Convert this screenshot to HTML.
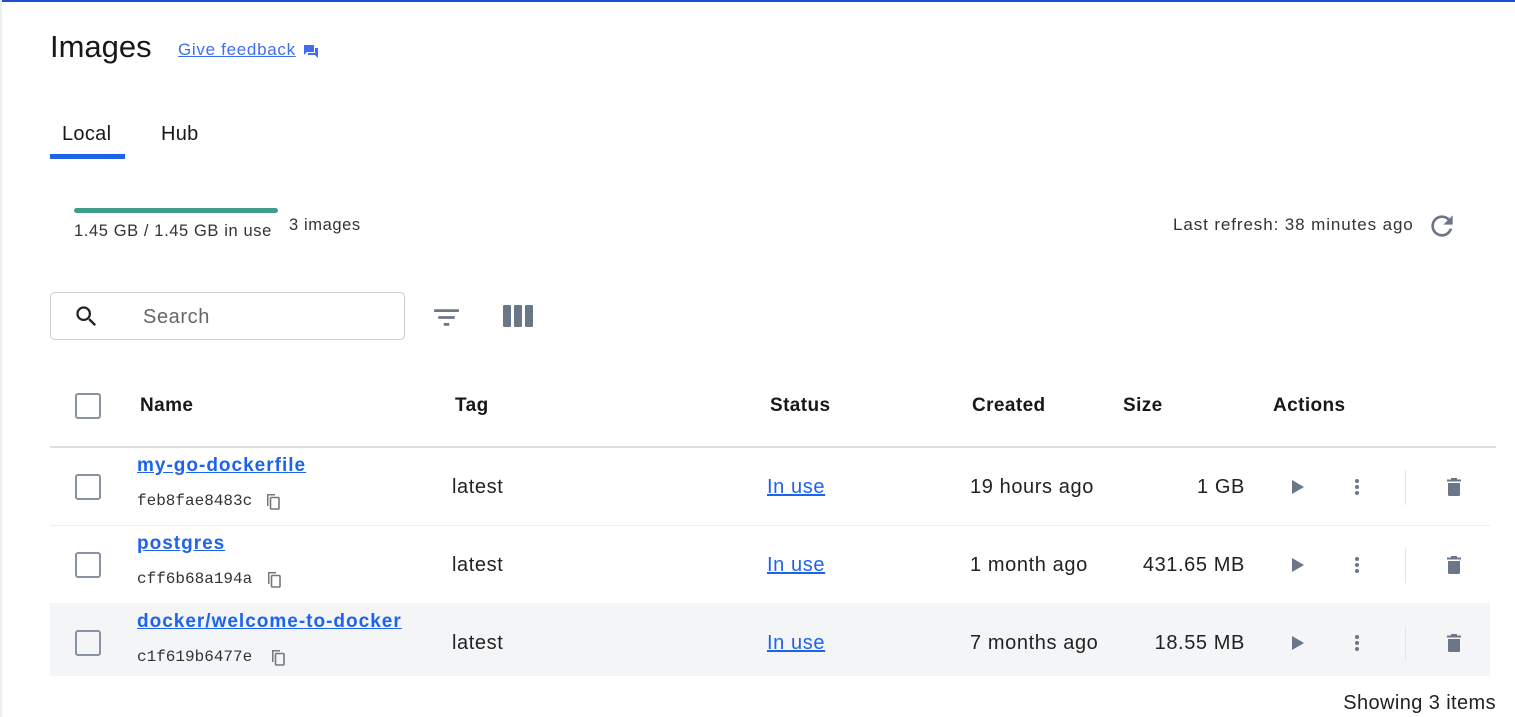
<!DOCTYPE html>
<html><head><meta charset="utf-8"><style>
*{margin:0;padding:0;box-sizing:border-box}
body{width:1515px;height:717px;overflow:hidden;background:#fff;font-family:"Liberation Sans",Arial,sans-serif;color:#17181a;position:relative}
.a{position:absolute;white-space:nowrap}
.lnk{color:#1d63ed;text-decoration:underline;font-weight:bold;font-size:19px;letter-spacing:1px}
.cb{position:absolute;width:26px;height:26px;border:2.5px solid #8a93a3;border-radius:3px}
.mono{font-family:"Liberation Mono",monospace;font-size:16px;color:#333}
.cell{font-size:20px;color:#222;letter-spacing:0.6px}
.hd{font-size:19px;font-weight:bold;color:#17181a;letter-spacing:0.4px}
</style></head><body>
<div class="a" style="left:0;top:0;width:1515px;height:2px;background:#1d4fd0"></div>
<div class="a" style="left:0;top:0;width:2px;height:717px;background:#eee"></div>
<div class="a" style="left:50px;top:29px;font-size:31px">Images</div>
<div class="a" style="left:178px;top:40px;font-size:17px;color:#3d6ff0;text-decoration:underline;letter-spacing:0.7px">Give feedback</div>
<svg class="a" style="left:303px;top:44px" width="16" height="16" viewBox="0 0 16 16"><path d="M1 1h10v7H4l-3 3z" fill="#3d6ff0"/><path d="M12 4h3v10l-3-3H5V9h7z" fill="#3d6ff0"/></svg>
<div class="a" style="left:62px;top:123px;font-size:20px;letter-spacing:0.3px">Local</div>
<div class="a" style="left:161px;top:123px;font-size:20px;letter-spacing:0.3px">Hub</div>
<div class="a" style="left:50px;top:154px;width:75px;height:5px;background:#1d63ed"></div>
<div class="a" style="left:74px;top:208px;width:204px;height:5px;background:#3e9d88;border-radius:3px"></div>
<div class="a" style="left:74px;top:222px;font-size:16.5px;color:#333;letter-spacing:0.6px">1.45 GB / 1.45 GB in use</div>
<div class="a" style="left:289px;top:216px;font-size:16.5px;color:#333;letter-spacing:0.6px">3 images</div>
<div class="a" style="left:1173px;top:215px;font-size:17px;color:#333;letter-spacing:0.9px">Last refresh: 38 minutes ago</div>
<svg class="a" style="left:1426px;top:210px" width="32" height="32" viewBox="0 0 24 24"><path d="M17.65 6.35A7.96 7.96 0 0 0 12 4a8 8 0 1 0 7.73 10h-2.08A6 6 0 1 1 12 6c1.66 0 3.14.69 4.22 1.78L13 11h7V4z" fill="#6c7689"/></svg>
<div class="a" style="left:50px;top:292px;width:355px;height:48px;border:1.5px solid #c9ccd1;border-radius:5px"></div>
<svg class="a" style="left:73px;top:303px" width="27" height="27" viewBox="0 0 24 24"><path d="M15.5 14h-.79l-.28-.27A6.47 6.47 0 0 0 16 9.5 6.5 6.5 0 1 0 9.5 16c1.61 0 3.09-.59 4.23-1.57l.27.28v.79l5 4.99L20.49 19zm-6 0C7.01 14 5 11.99 5 9.5S7.01 5 9.5 5 14 7.01 14 9.5 11.99 14 9.5 14" fill="#222"/></svg>
<div class="a" style="left:143px;top:306px;font-size:20px;color:#666;letter-spacing:0.6px">Search</div>
<svg class="a" style="left:430px;top:301px" width="33" height="33" viewBox="0 0 24 24"><path d="M3 6h18v2H3zm3 5h12v2H6zm4 5h4v2h-4z" fill="#6c7689"/></svg>
<svg class="a" style="left:503px;top:305px" width="30" height="22" viewBox="0 0 30 22"><rect x="0" y="0" width="8" height="22" rx="1" fill="#6c7689"/><rect x="11" y="0" width="8" height="22" rx="1" fill="#6c7689"/><rect x="22" y="0" width="8" height="22" rx="1" fill="#6c7689"/></svg>

<div class="cb" style="left:75px;top:393px"></div>
<div class="a hd" style="left:140px;top:395px">Name</div>
<div class="a hd" style="left:455px;top:395px">Tag</div>
<div class="a hd" style="left:770px;top:395px">Status</div>
<div class="a hd" style="left:972px;top:395px">Created</div>
<div class="a hd" style="left:1123px;top:395px">Size</div>
<div class="a hd" style="left:1273px;top:395px">Actions</div>
<div class="a" style="left:50px;top:446px;width:1446px;height:1.5px;background:#dcdee2"></div>
<div class="a" style="left:50px;top:525px;width:1440px;height:1px;background:#eceef1"></div>
<div class="a" style="left:50px;top:603px;width:1440px;height:73px;background:#f4f5f7"></div>

<div class="cb" style="left:75px;top:474px"></div>
<div class="a lnk" style="left:137px;top:455px">my-go-dockerfile</div>
<div class="a mono" style="left:137px;top:492px">feb8fae8483c</div>
<div class="a cell" style="left:452px;top:476px">latest</div>
<div class="a cell" style="left:767px;top:476px;color:#1d63ed;text-decoration:underline">In use</div>
<div class="a cell" style="left:970px;top:476px">19 hours ago</div>
<div class="a cell" style="left:1095px;top:476px;width:150px;text-align:right">1 GB</div>

<div class="cb" style="left:75px;top:552px"></div>
<div class="a lnk" style="left:137px;top:533px">postgres</div>
<div class="a mono" style="left:137px;top:570px">cff6b68a194a</div>
<div class="a cell" style="left:452px;top:554px">latest</div>
<div class="a cell" style="left:767px;top:554px;color:#1d63ed;text-decoration:underline">In use</div>
<div class="a cell" style="left:970px;top:554px">1 month ago</div>
<div class="a cell" style="left:1095px;top:554px;width:150px;text-align:right">431.65 MB</div>

<div class="cb" style="left:75px;top:630px"></div>
<div class="a lnk" style="left:137px;top:611px">docker/welcome-to-docker</div>
<div class="a mono" style="left:137px;top:648px">c1f619b6477e</div>
<div class="a cell" style="left:452px;top:632px">latest</div>
<div class="a cell" style="left:767px;top:632px;color:#1d63ed;text-decoration:underline">In use</div>
<div class="a cell" style="left:970px;top:632px">7 months ago</div>
<div class="a cell" style="left:1095px;top:632px;width:150px;text-align:right">18.55 MB</div>

<svg class="a" style="left:265px;top:493px" width="16" height="18" viewBox="0 0 16 18"><path d="M2 1h8v1.5H3.5V13H2z" fill="#777"/><rect x="5.5" y="4.5" width="8.5" height="11.5" rx="1" fill="none" stroke="#777" stroke-width="1.6"/></svg>
<svg class="a" style="left:266px;top:571px" width="16" height="18" viewBox="0 0 16 18"><path d="M2 1h8v1.5H3.5V13H2z" fill="#777"/><rect x="5.5" y="4.5" width="8.5" height="11.5" rx="1" fill="none" stroke="#777" stroke-width="1.6"/></svg>
<svg class="a" style="left:270px;top:649px" width="16" height="18" viewBox="0 0 16 18"><path d="M2 1h8v1.5H3.5V13H2z" fill="#777"/><rect x="5.5" y="4.5" width="8.5" height="11.5" rx="1" fill="none" stroke="#777" stroke-width="1.6"/></svg>

<svg class="a" style="left:1291px;top:479px" width="14" height="16" viewBox="0 0 14 16"><path d="M1 1l12 7-12 7z" fill="#6c7689"/></svg>
<svg class="a" style="left:1291px;top:557px" width="14" height="16" viewBox="0 0 14 16"><path d="M1 1l12 7-12 7z" fill="#6c7689"/></svg>
<svg class="a" style="left:1291px;top:635px" width="14" height="16" viewBox="0 0 14 16"><path d="M1 1l12 7-12 7z" fill="#6c7689"/></svg>
<svg class="a" style="left:1353px;top:478px" width="8" height="18" viewBox="0 0 8 18"><circle cx="4" cy="3" r="2" fill="#6c7689"/><circle cx="4" cy="9" r="2" fill="#6c7689"/><circle cx="4" cy="15" r="2" fill="#6c7689"/></svg>
<svg class="a" style="left:1353px;top:556px" width="8" height="18" viewBox="0 0 8 18"><circle cx="4" cy="3" r="2" fill="#6c7689"/><circle cx="4" cy="9" r="2" fill="#6c7689"/><circle cx="4" cy="15" r="2" fill="#6c7689"/></svg>
<svg class="a" style="left:1353px;top:634px" width="8" height="18" viewBox="0 0 8 18"><circle cx="4" cy="3" r="2" fill="#6c7689"/><circle cx="4" cy="9" r="2" fill="#6c7689"/><circle cx="4" cy="15" r="2" fill="#6c7689"/></svg>
<div class="a" style="left:1405px;top:470px;width:1px;height:35px;background:#e3e5e8"></div>
<div class="a" style="left:1405px;top:548px;width:1px;height:35px;background:#e3e5e8"></div>
<div class="a" style="left:1405px;top:626px;width:1px;height:35px;background:#e3e5e8"></div>
<svg class="a" style="left:1446px;top:478px" width="16" height="18" viewBox="0 0 16 18"><path d="M5 0h6v1.5h4V3.5H1V1.5h4zM2 5h12v11.5a1.5 1.5 0 0 1-1.5 1.5h-9A1.5 1.5 0 0 1 2 16.5z" fill="#6c7689"/></svg>
<svg class="a" style="left:1446px;top:556px" width="16" height="18" viewBox="0 0 16 18"><path d="M5 0h6v1.5h4V3.5H1V1.5h4zM2 5h12v11.5a1.5 1.5 0 0 1-1.5 1.5h-9A1.5 1.5 0 0 1 2 16.5z" fill="#6c7689"/></svg>
<svg class="a" style="left:1446px;top:634px" width="16" height="18" viewBox="0 0 16 18"><path d="M5 0h6v1.5h4V3.5H1V1.5h4zM2 5h12v11.5a1.5 1.5 0 0 1-1.5 1.5h-9A1.5 1.5 0 0 1 2 16.5z" fill="#6c7689"/></svg>

<div class="a" style="left:1296px;top:692px;width:200px;text-align:right;font-size:20px;color:#222;letter-spacing:0.4px">Showing 3 items</div>
</body></html>
